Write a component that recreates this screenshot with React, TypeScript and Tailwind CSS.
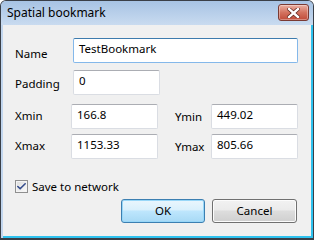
import { Check } from 'lucide-react';

const FONT = "font-['Noto_Sans',_'Liberation_Sans',_sans-serif]";

function TextBox({
  value,
  width,
  focused = false,
}: {
  value: string;
  width: string;
  focused?: boolean;
}) {
  return (
    <div
      className={`${width} h-[25px] pl-[5px] pt-[2px] bg-white rounded-[2px] border text-[11.5px] leading-[16px] text-black ${
        focused
          ? 'border-[#84b8ea] border-t-[#3d7bad]'
          : 'border-[#dadde3] border-t-[#abadb3]'
      }`}
    >
      {value}
    </div>
  );
}

function Label({ text, width, offset }: { text: string; width: string; offset: string }) {
  return (
    <span className={`${width} ${offset} shrink-0 self-start text-[11.5px] leading-[16px] text-black`}>
      {text}
    </span>
  );
}

function CloseButton() {
  return (
    <button
      type="button"
      aria-label="Close"
      className="w-[31px] h-[17px] mt-[3px] flex items-center justify-center rounded-[3px] border border-[#7a3a33] bg-gradient-to-b from-[#eab0a3] via-[#d3725f] to-[#c04a38] shadow-[inset_0_0_0_1px_rgba(255,255,255,0.35)]"
    >
      <svg width="13" height="10" viewBox="0 0 13 10">
        <path
          d="M2 1 L11 9 M11 1 L2 9"
          stroke="#5a2019"
          strokeWidth="3.8"
          strokeLinecap="square"
        />
        <path
          d="M2 1 L11 9 M11 1 L2 9"
          stroke="#ffffff"
          strokeWidth="2.4"
          strokeLinecap="square"
        />
      </svg>
    </button>
  );
}

export default function App() {
  return (
    <div
      className={`${FONT} w-[314px] h-[240px] flex flex-col border border-b-2 border-[#3a3f47] rounded-t-[6px] bg-[#c2d6ee] overflow-hidden`}
    >
      <div className="h-[24px] shrink-0 flex items-start justify-between pl-[6px] pr-[4px] bg-gradient-to-b from-[#a7c3e4] to-[#c9dbf0]">
        <span className="text-[12px] leading-[24px] text-black">Spatial bookmark</span>
        <CloseButton />
      </div>

      <div className="flex-1 flex flex-col bg-[#f0f0f0] ml-[2px] border-r-2 border-b-2 border-[#2ec2ef] pl-[12px] pt-[13px]">
        <div className="flex h-[25px]">
          <Label text="Name" width="w-[58px]" offset="mt-[8px]" />
          <TextBox value="TestBookmark" width="w-[225px]" focused />
        </div>

        <div className="flex h-[25px] mt-[7px]">
          <Label text="Padding" width="w-[58px]" offset="mt-[6px]" />
          <TextBox value="0" width="w-[87px]" />
        </div>

        <div className="flex items-center h-[25px] mt-[9px]">
          <Label text="Xmin" width="w-[56px]" offset="mt-[4px]" />
          <TextBox value="166.8" width="w-[87px]" />
          <span className="ml-[17px] w-[36px] text-[11.5px] text-black">Ymin</span>
          <TextBox value="449.02" width="w-[87px]" />
        </div>

        <div className="flex items-center h-[25px] mt-[5px]">
          <Label text="Xmax" width="w-[56px]" offset="mt-[4px]" />
          <TextBox value="1153.33" width="w-[87px]" />
          <span className="ml-[17px] w-[36px] text-[11.5px] text-black">Ymax</span>
          <TextBox value="805.66" width="w-[87px]" />
        </div>

        <label className="flex items-center gap-[4px] mt-[21px] h-[13px]">
          <span className="w-[13px] h-[13px] flex items-center justify-center border border-[#8f8f8f] bg-gradient-to-br from-[#dcdcdc] to-[#fbfbfb] shadow-[inset_0_0_0_1px_#f4f4f4]">
            <Check size={11} strokeWidth={3.5} className="text-[#354c8c]" />
          </span>
          <span className="text-[11.5px] text-black">Save to network</span>
        </label>

        <div className="flex mt-[6px] ml-[106px] gap-[7px]">
          <button
            type="button"
            className="w-[84px] h-[24px] rounded-[3px] border border-[#3c7fb1] bg-[linear-gradient(#eaf6fd_0%,#d9f0fc_45%,#bee6fd_50%,#a7d9f5_100%)] shadow-[inset_0_0_0_1px_#98d7f8] text-[11.5px] text-black"
          >
            OK
          </button>
          <button
            type="button"
            className="w-[85px] h-[24px] rounded-[3px] border border-[#707070] bg-[linear-gradient(#f2f2f2_0%,#ebebeb_45%,#dddddd_50%,#cfcfcf_100%)] shadow-[inset_0_0_0_1px_#fcfcfc] text-[11.5px] text-black"
          >
            Cancel
          </button>
        </div>
      </div>
    </div>
  );
}
